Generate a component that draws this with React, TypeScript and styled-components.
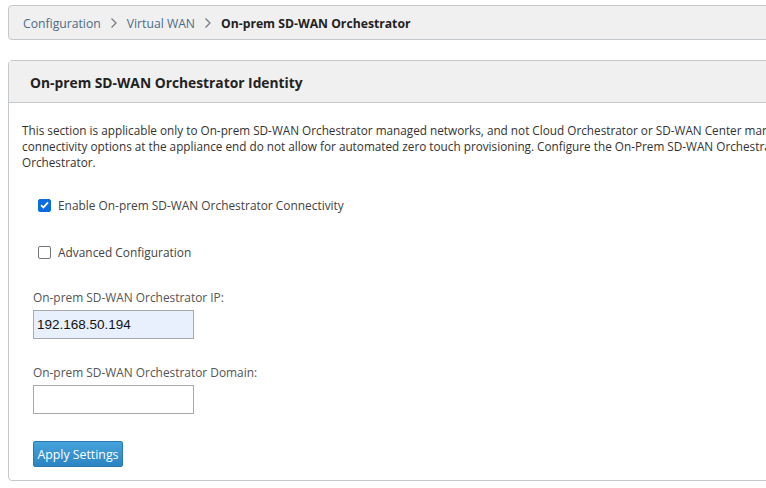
import React from "react";
import styled, { createGlobalStyle } from "styled-components";

const Global = createGlobalStyle`
  html, body { margin: 0; padding: 0; background: #ffffff; overflow: hidden; }
  body { font-family: "Open Sans", "Noto Sans", sans-serif; }
  * { box-sizing: border-box; }
`;

const Page = styled.div`
  width: 766px;
  height: 488px;
  overflow: hidden;
  padding: 5px 0 0 8px;
`;

const Wide = styled.div`
  width: 900px;
  display: flex;
  flex-direction: column;
`;

const Breadcrumb = styled.nav`
  height: 35px;
  border: 1px solid #c3c8cd;
  border-radius: 4px;
  background: #f0f0f0;
  display: flex;
  align-items: center;
  padding-left: 14px;
  padding-top: 1px;
  gap: 9px;
  font-size: 12.2px;
`;

const Crumb = styled.span<{ $current?: boolean }>`
  color: ${(p) => (p.$current ? "#222" : "#4d6b88")};
  font-weight: ${(p) => (p.$current ? 700 : 400)};
`;

const Sep = styled.span`
  display: inline-flex;
  color: #777;
`;

const Panel = styled.section`
  margin-top: 20px;
  border: 1px solid #c3c8cd;
  border-radius: 4px;
  height: 421px;
  display: flex;
  flex-direction: column;
`;

const PanelHeader = styled.header`
  height: 42px;
  background: #f0f0f0;
  border-bottom: 1px solid #c3c8cd;
  display: flex;
  align-items: center;
  padding-left: 21px;
  padding-top: 1px;
  font-size: 13.8px;
  font-weight: 700;
  color: #222;
`;

const PanelBody = styled.div`
  padding: 19px 0 0 13px;
  display: flex;
  flex-direction: column;
`;

const Intro = styled.p`
  margin: 0;
  font-size: 11.75px;
  line-height: 16px;
  color: #333;
  white-space: nowrap;
`;

const CheckRow = styled.label<{ $top: number }>`
  display: flex;
  align-items: center;
  gap: 7px;
  margin: ${(p) => p.$top}px 0 0 16px;
  font-size: 11.9px;
  color: #444;
  height: 16px;
`;

const Box = styled.span<{ $checked?: boolean }>`
  width: 13px;
  height: 13px;
  border-radius: 2px;
  border: 1px solid ${(p) => (p.$checked ? "#0b6ce0" : "#767676")};
  background: ${(p) => (p.$checked ? "#0b6ce0" : "#fff")};
  display: inline-flex;
  align-items: center;
  justify-content: center;
`;

const Field = styled.div<{ $top: number }>`
  display: flex;
  flex-direction: column;
  margin: ${(p) => p.$top}px 0 0 11px;
`;

const Label = styled.span`
  font-size: 11.9px;
  line-height: 16px;
  color: #555;
`;

const Input = styled.div<{ $filled?: boolean }>`
  margin-top: 5px;
  width: 161px;
  height: 29px;
  border: 1px solid #a9a9a9;
  background: ${(p) => (p.$filled ? "#e8f0fe" : "#fff")};
  display: flex;
  align-items: center;
  padding-left: 3px;
  font-family: "Liberation Sans", Arial, sans-serif;
  font-size: 13.5px;
  color: #111;
`;

const Button = styled.button`
  margin: 27px 0 0 11px;
  width: 90px;
  height: 26px;
  border: 1px solid #2a78b0;
  border-radius: 2px;
  background: linear-gradient(#46a3dc, #2b84c2);
  color: #fff;
  font-family: "Open Sans", "Noto Sans", sans-serif;
  font-size: 12.3px;
  padding: 0;
  align-self: flex-start;
`;

const Chevron = () => (
  <svg width="8" height="12" viewBox="0 0 8 12">
    <path d="M1.5 1.5 L6 6 L1.5 10.5" fill="none" stroke="#777" strokeWidth="1.2" />
  </svg>
);

export default function App() {
  return (
    <Page>
      <Global />
      <Wide>
        <Breadcrumb>
          <Crumb>Configuration</Crumb>
          <Sep><Chevron /></Sep>
          <Crumb>Virtual WAN</Crumb>
          <Sep><Chevron /></Sep>
          <Crumb $current>On-prem SD-WAN Orchestrator</Crumb>
        </Breadcrumb>
        <Panel>
          <PanelHeader>On-prem SD-WAN Orchestrator Identity</PanelHeader>
          <PanelBody>
            <Intro>
              This section is applicable only to On-prem SD-WAN Orchestrator managed networks, and not Cloud Orchestrator or SD-WAN Center managed networks. Use this option when the
              <br />
              connectivity options at the appliance end do not allow for automated zero touch provisioning. Configure the On-Prem SD-WAN Orchestrator IP address or domain name to connect to the
              <br />
              Orchestrator.
            </Intro>
            <CheckRow $top={27}>
              <Box $checked>
                <svg width="9" height="8" viewBox="0 0 9 8">
                  <path d="M1 4.2 L3.4 6.5 L8 1.3" fill="none" stroke="#fff" strokeWidth="1.8" />
                </svg>
              </Box>
              Enable On-prem SD-WAN Orchestrator Connectivity
            </CheckRow>
            <CheckRow $top={31}>
              <Box />
              Advanced Configuration
            </CheckRow>
            <Field $top={29}>
              <Label>On-prem SD-WAN Orchestrator IP:</Label>
              <Input $filled>192.168.50.194</Input>
            </Field>
            <Field $top={25}>
              <Label>On-prem SD-WAN Orchestrator Domain:</Label>
              <Input />
            </Field>
            <Button>Apply Settings</Button>
          </PanelBody>
        </Panel>
      </Wide>
    </Page>
  );
}
